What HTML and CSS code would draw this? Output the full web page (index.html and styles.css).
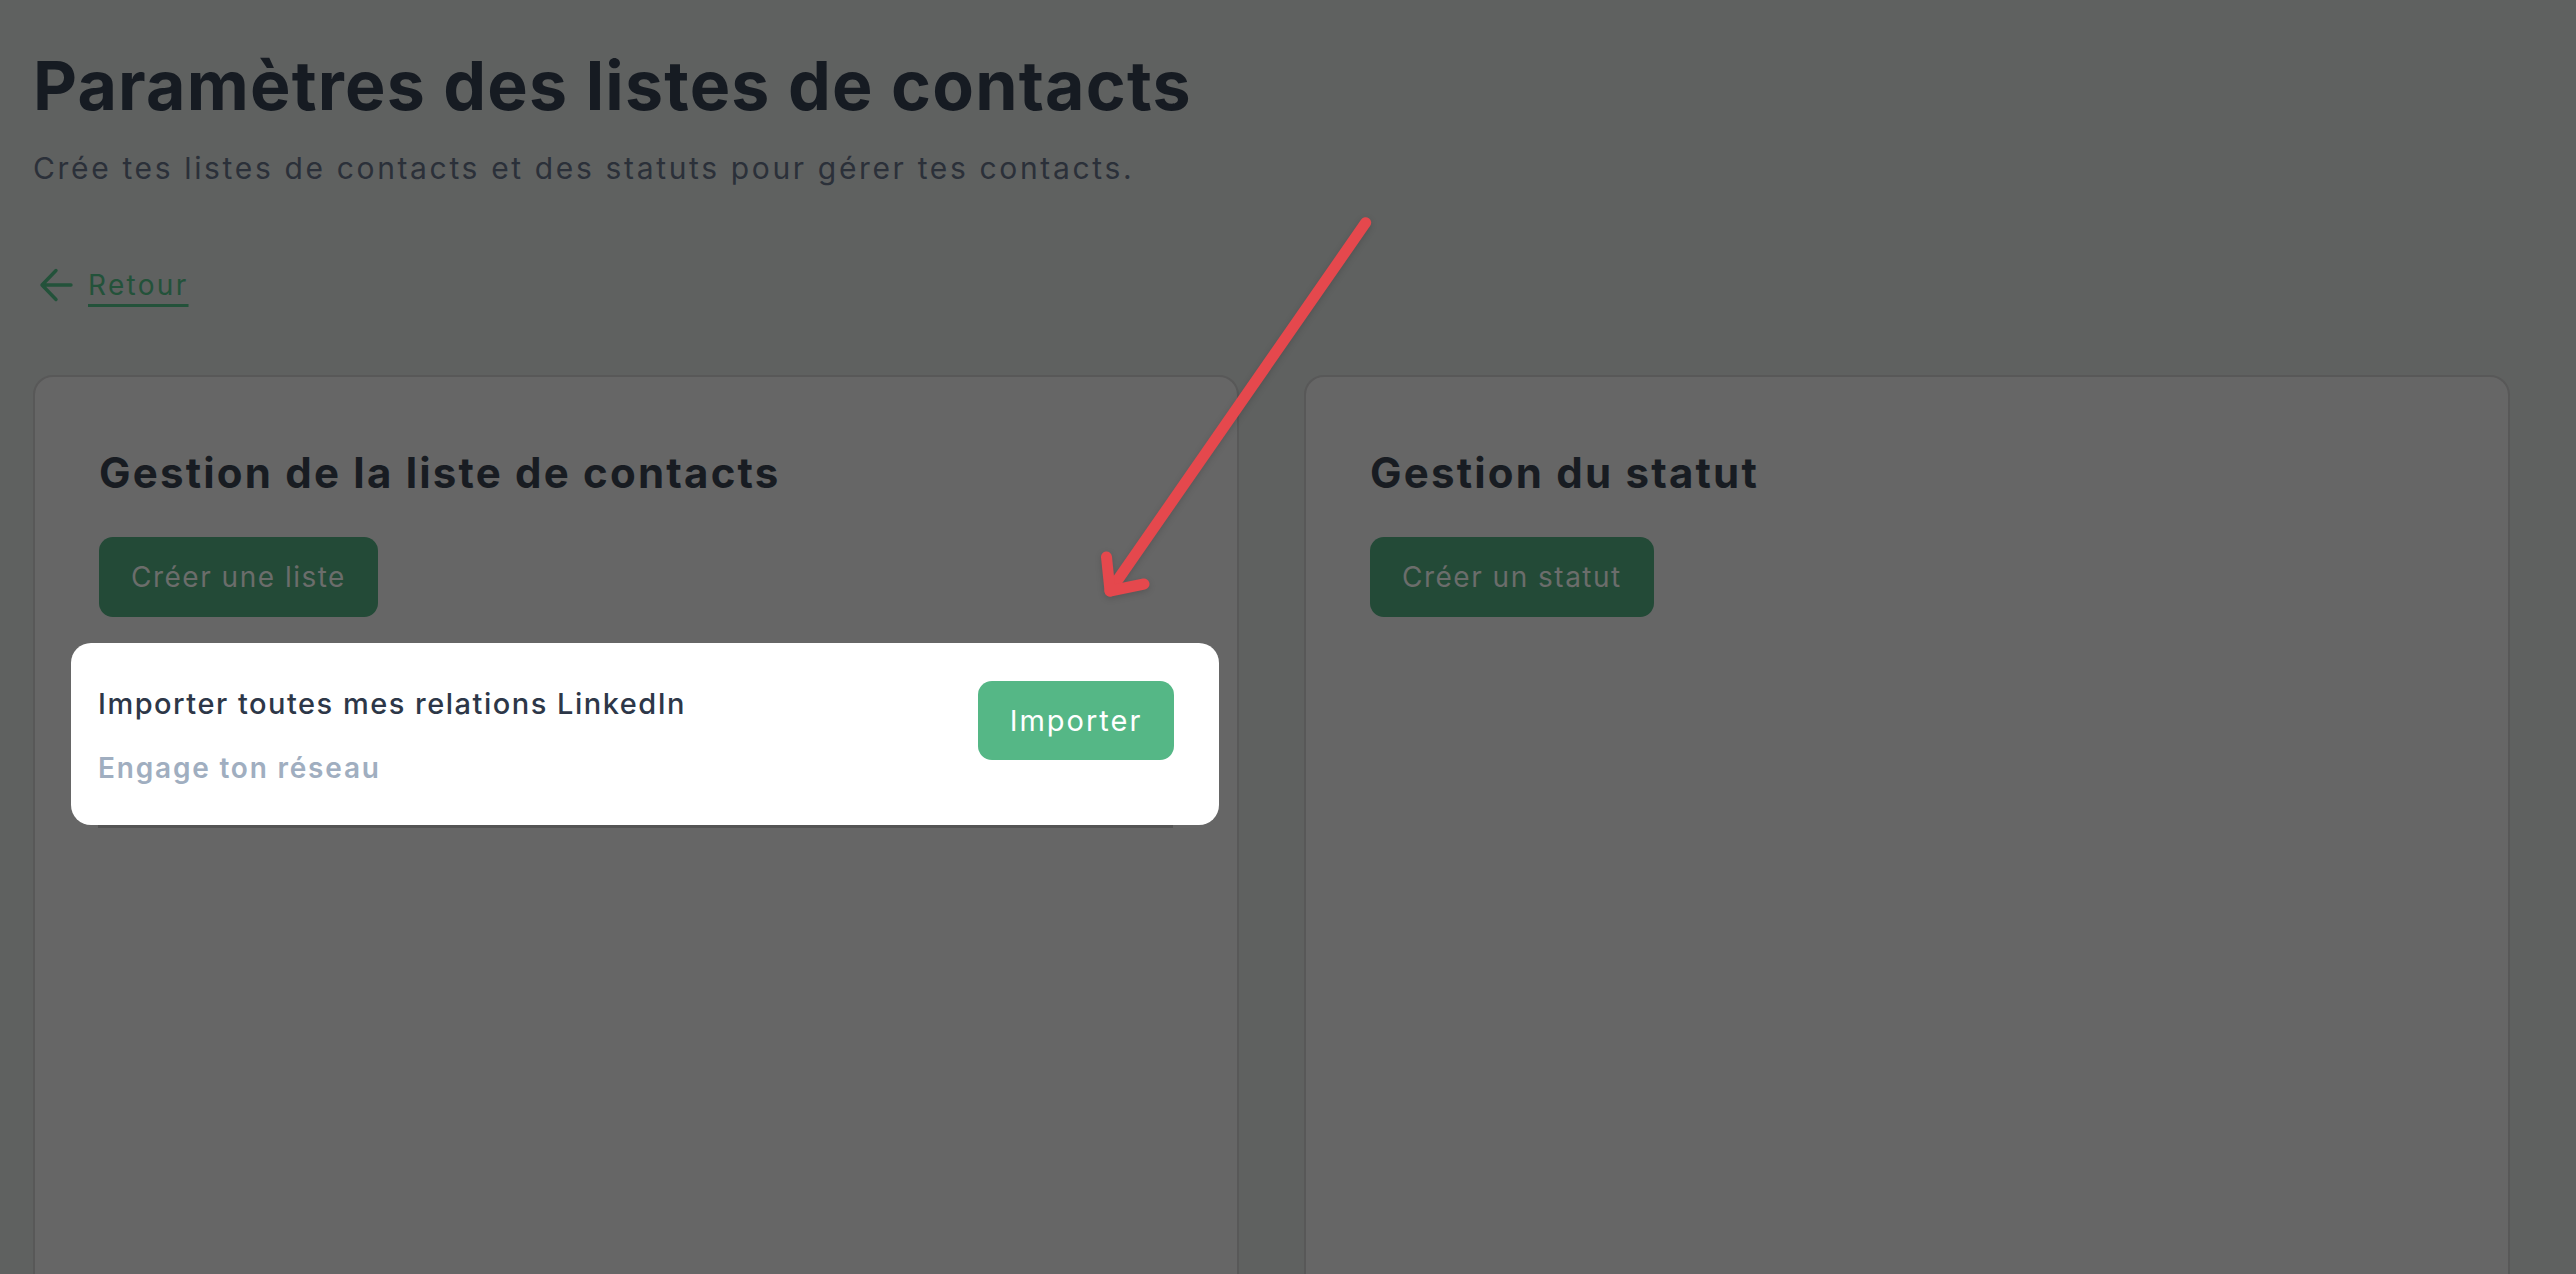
FILE: index.html
```html
<!DOCTYPE html>
<html lang="fr">
<head>
<meta charset="utf-8">
<title>Paramètres des listes de contacts</title>
<link rel="stylesheet" href="styles.css">
</head>
<body>
<main class="page">
  <h1 class="title">Paramètres des listes de contacts</h1>
  <p class="subtitle">Crée tes listes de contacts et des statuts pour gérer tes contacts.</p>
  <a class="back" href="#">
    <svg class="back-icon" viewBox="0 0 34 34" width="34" height="34" aria-hidden="true">
      <path d="M3 17 H32 M17 2.5 L3 17 L17 31.5" fill="none" stroke="currentColor" stroke-width="3.4" stroke-linecap="round" stroke-linejoin="round"/>
    </svg>
    <span class="back-text">Retour</span>
  </a>
  <div class="cards">
    <section class="card">
      <h2 class="card-title">Gestion de la liste de contacts</h2>
      <button class="btn btn-dim">Créer une liste</button>
      <div class="spot">
        <div class="spot-text">
          <div class="spot-title">Importer toutes mes relations LinkedIn</div>
          <div class="spot-sub">Engage ton réseau</div>
        </div>
        <button class="btn btn-green">Importer</button>
      </div>
    </section>
    <section class="card">
      <h2 class="card-title">Gestion du statut</h2>
      <button class="btn btn-dim">Créer un statut</button>
    </section>
  </div>
  <svg class="pointer" viewBox="0 0 300 420" width="300" height="420" aria-hidden="true">
    <g fill="none" stroke="#e5484d" stroke-width="11" stroke-linecap="round" stroke-linejoin="round">
      <path d="M275.7 22.7 L20 391"/>
      <path d="M16.5 357 L20 391 L54 384"/>
    </g>
  </svg>
</main>
</body>
</html>
```

FILE: styles.css
```css
* { box-sizing: border-box; }

html, body {
  margin: 0;
  height: 100%;
  overflow: hidden;
}

body {
  background: #5f6160;
  font-family: Inter, "Noto Sans", "Liberation Sans", sans-serif;
  color: #181c22;
}

.page {
  position: relative;
  padding: 44px 66px 0 33px;
}

.title {
  margin: 0;
  font-size: 68px;
  line-height: 82px;
  font-weight: 700;
  letter-spacing: 1.2px;
  color: #161b22;
}

.subtitle {
  margin: 22px 0 0;
  font-size: 30px;
  line-height: 40px;
  font-weight: 400;
  letter-spacing: 2.65px;
  color: #2b3039;
}

.back {
  margin-top: 77px;
  display: inline-flex;
  align-items: center;
  gap: 15px;
  color: #23523a;
  text-decoration: none;
  height: 40px;
}

.back-icon {
  display: block;
  margin-left: 6px;
}

.back-text {
  font-size: 28px;
  line-height: 40px;
  letter-spacing: 2.3px;
  text-decoration: underline;
  text-decoration-thickness: 3px;
  text-underline-offset: 9px;
}

.cards {
  margin-top: 69px;
  display: grid;
  grid-template-columns: 1fr 1fr;
  gap: 65px;
}

.card {
  height: 960px;
  background: #666666;
  border: 2px solid #585858;
  border-radius: 20px;
  padding: 71px 64px 0;
  display: flex;
  flex-direction: column;
  align-items: flex-start;
}

.card-title {
  margin: 0;
  font-size: 42px;
  line-height: 50px;
  font-weight: 700;
  letter-spacing: 2.2px;
  color: #181c22;
}

.btn {
  font-family: inherit;
  border: 0;
  border-radius: 14px;
  height: 80px;
  padding: 0 32px;
  font-size: 28px;
  letter-spacing: 1.5px;
  cursor: pointer;
}

.btn-dim {
  margin-top: 39px;
  background: #234a37;
  color: #6b6d6b;
}

.btn-green {
  height: 79px;
  width: 196px;
  padding: 0;
  background: #55b786;
  color: #ffffff;
  font-size: 29px;
  letter-spacing: 2px;
  flex: none;
}

.spot {
  align-self: stretch;
  margin: 26px -46px 0 -28px;
  height: 182px;
  padding: 38px 45px 0 27px;
  background: #ffffff;
  border-radius: 20px;
  display: flex;
  justify-content: space-between;
  align-items: flex-start;
  box-shadow: -9.5px 39.5px 0 -36.5px #545454;
}

.spot-text {
  margin-top: 3px;
}

.spot-title {
  font-size: 29px;
  line-height: 40px;
  font-weight: 500;
  letter-spacing: 1.5px;
  color: #2d3748;
}

.spot-sub {
  margin-top: 24px;
  font-size: 28px;
  line-height: 40px;
  font-weight: 600;
  letter-spacing: 1.8px;
  color: #a0aec0;
}

.pointer {
  position: absolute;
  left: 1090px;
  top: 200px;
  filter: drop-shadow(0 2px 3px rgba(0, 0, 0, 0.15));
}
```
